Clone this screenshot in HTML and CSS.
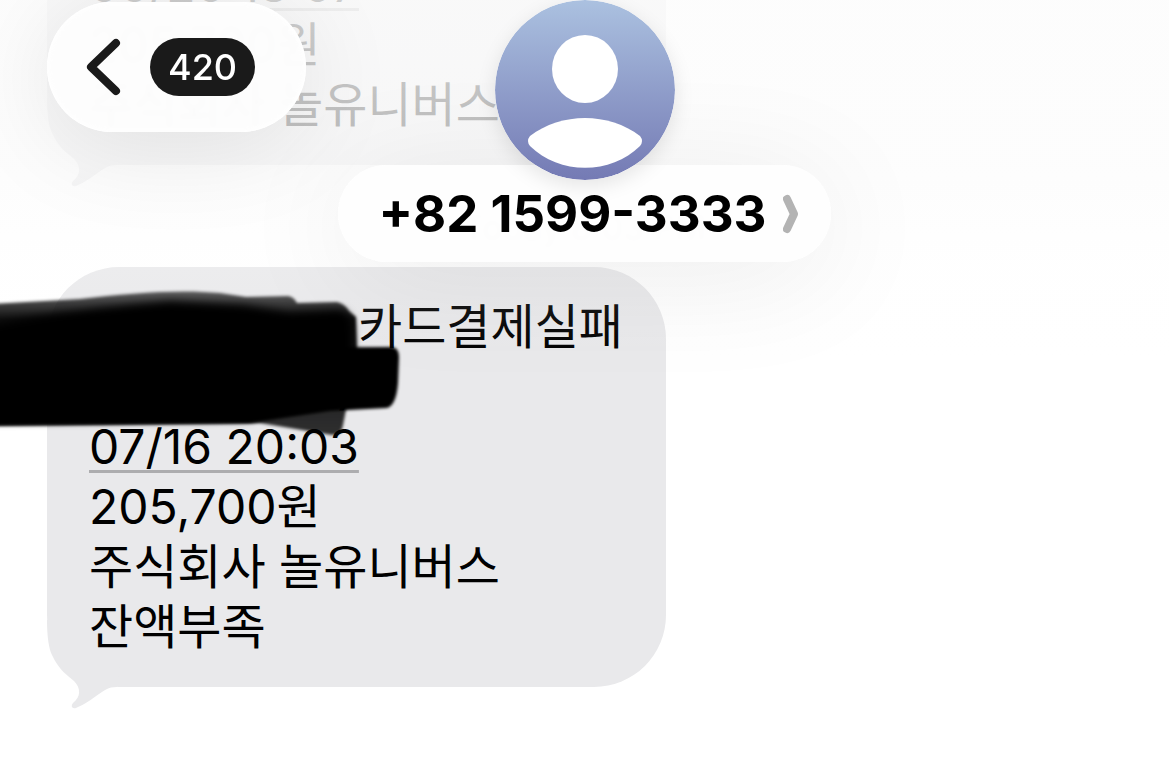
FILE: index.html
```html
<!DOCTYPE html>
<html lang="ko">
<head>
<meta charset="utf-8">
<meta name="viewport" content="width=device-width, initial-scale=1">
<title>+82 1599-3333</title>
<link rel="stylesheet" href="styles.css">
</head>
<body>
<main class="thread">
  <article class="bubble bubble-earlier">
    <p class="latin"><a class="date" href="#earlier">06/20 18:07</a></p>
    <p><span class="latin">205,700</span>원</p>
    <p>주식회사 놀유니버스</p>
    <svg class="tail" viewBox="0 0 66 60" aria-hidden="true"><path d="M0 -29C0 -12 2 0 5 6C12 21 20 26 27 32C34 39 34 48 26 54C23 58 26 61 31 58C43 53 53 43 60 40Q63 38 70 38L80 -29Z"/></svg>
  </article>
  <time class="stamp">Today 8:03 PM</time>
  <article class="bubble">
    <p class="first-line">카드결제실패</p>
    <p class="second-line latin">)</p>
    <p class="latin"><a class="date" href="#event">07/16 20:03</a></p>
    <p><span class="latin">205,700</span>원</p>
    <p>주식회사 놀유니버스</p>
    <p>잔액부족</p>
    <svg class="tail" viewBox="0 0 66 60" aria-hidden="true"><path d="M0 -29C0 -12 2 0 5 6C12 21 20 26 27 32C34 39 34 48 26 54C23 58 26 61 31 58C43 53 53 43 60 40Q63 38 70 38L80 -29Z"/></svg>
  </article>
</main>
<div class="top-fade"></div>
<header class="bar">
  <button class="back" type="button" aria-label="뒤로, 420">
    <svg width="36" height="58" viewBox="0 0 36 58" aria-hidden="true"><path d="M31 5L6 29L31 53"/></svg>
    <span class="count">420</span>
  </button>
  <div class="contact">
    <svg class="avatar" viewBox="0 0 180 180" aria-hidden="true">
      <defs><linearGradient id="sky" x2="0" y2="1"><stop stop-color="#abc1e0"/><stop offset="1" stop-color="#747ab4"/></linearGradient></defs>
      <circle cx="90" cy="90" r="90" fill="url(#sky)"/>
      <ellipse cx="90" cy="69" rx="33" ry="34" fill="#fff"/>
      <path fill="#fff" d="M35 136C66 112 114 112 145 136Q149 141 145 146C116 175 64 175 35 146Q31 141 35 136Z"/>
    </svg>
    <button class="name" type="button">+82 1599-3333
      <svg width="16" height="40" viewBox="0 0 16 40" aria-hidden="true"><path d="M4 5L11 20L4 35"/></svg>
    </button>
  </div>
</header>
<svg class="marker" width="410" height="156" viewBox="0 0 410 156" aria-hidden="true">
  <defs>
    <filter id="soft" x="-5%" y="-10%" width="110%" height="120%"><feGaussianBlur stdDeviation="1.6"/></filter>
    <filter id="softer" x="-5%" y="-10%" width="110%" height="120%"><feGaussianBlur stdDeviation="4"/></filter>
    <linearGradient id="smear" x2="0" y2="1"><stop stop-opacity=".6"/><stop offset=".2" stop-opacity=".95"/><stop offset="1" stop-opacity=".8"/></linearGradient>
  </defs>
  <path filter="url(#soft)" fill="url(#smear)" d="M-10 21L80 16C130 10 180 6 220 10L246 14L288 13Q294 14 297 20L337 19Q345 21 349 28L356 34L357 70L343 142Q342 152 332 152L260 140L-10 143Z"/>
  <path filter="url(#softer)" d="M-10 42C30 34 100 24 170 18L244 22L290 30L340 27Q350 30 352 42L354 80L250 136L-10 138Z"/>
  <path filter="url(#soft)" d="M-10 66L392 64Q399 65 399 74L398 100Q396 124 386 125L330 128L250 140L-10 142Z"/>
</svg>
</body>
</html>
```
FILE: styles.css
```css
* { box-sizing: border-box; }
body {
  margin: 0;
  min-height: 100vh;
  position: relative;
  overflow: hidden;
  background: #fff;
  color: #000;
  font-family: "Noto Sans CJK KR", sans-serif;
}
p { margin: 0; height: 60px; white-space: nowrap; }
button { border: 0; padding: 0; font: inherit; color: inherit; cursor: pointer; }
.latin { font-family: Inter, sans-serif; }
p.latin { line-height: 68px; }
.thread {
  display: flex;
  flex-direction: column;
  align-items: flex-start;
  margin-top: -75px;
  padding: 0 47px 72px;
}
.bubble {
  position: relative;
  isolation: isolate;
  min-width: 619px;
  padding: 26px 42px 34px;
  border-radius: 72px;
  background: #e9e9eb;
  font-size: 48px;
  line-height: 60px;
}
.stamp {
  align-self: center;
  margin: 43px 0 19px;
  color: #8a8a8e;
  font: 34px/40px Inter, sans-serif;
}
.first-line { padding-left: 269px; }
.second-line { padding-left: 248px; }
.date {
  color: inherit;
  text-decoration: underline;
  text-decoration-color: #adadaf;
  text-decoration-thickness: 3px;
  text-underline-offset: 6px;
}
.tail {
  position: absolute;
  z-index: -1;
  left: 0;
  bottom: -22px;
  width: 66px;
  height: 60px;
  overflow: visible;
  fill: #e9e9eb;
}
.marker { position: absolute; left: 0; top: 283px; pointer-events: none; }
.top-fade {
  position: absolute;
  inset: 0 0 auto;
  height: 400px;
  background: linear-gradient(rgba(252,252,252,.82), rgba(252,252,252,.74) 165px, rgba(252,252,252,.16) 266px, rgba(252,252,252,.08) 310px, rgba(252,252,252,0) 360px);
  pointer-events: none;
}
.bar { position: absolute; inset: 0 0 auto; }
.back {
  position: absolute;
  left: 47px;
  top: 2px;
  display: flex;
  align-items: center;
  gap: 29px;
  padding: 0 51px 0 38px;
  height: 130px;
  border-radius: 65px;
  background: rgba(253,253,253,.96);
  backdrop-filter: blur(2px);
  box-shadow: 0 12px 100px rgba(0,0,0,.1), inset 0 0 4px 2px #fff;
}
.back path { fill: none; stroke: #1a1a1a; stroke-width: 8; stroke-linecap: round; stroke-linejoin: round; }
.count {
  padding: 0 18px;
  border-radius: 29px;
  background: #1a1a1a;
  color: #fff;
  font: 500 36px/58px Inter, sans-serif;
}
.contact { display: flex; flex-direction: column; align-items: center; }
.avatar {
  position: relative;
  z-index: 1;
  width: 180px;
  height: 180px;
  border-radius: 50%;
  box-shadow: 0 6px 20px rgba(0,0,0,.1);
}
.name {
  display: flex;
  align-items: center;
  gap: 16px;
  margin-top: -15px;
  padding: 0 32px 0 40px;
  height: 97px;
  border-radius: 49px;
  background: rgba(254,254,254,.97);
  backdrop-filter: blur(2px);
  box-shadow: 0 14px 120px rgba(0,0,0,.08);
  font: 700 51px/60px Inter, sans-serif;
}
.name path { fill: none; stroke: #b3b3b3; stroke-width: 8; stroke-linecap: round; stroke-linejoin: round; }
```
